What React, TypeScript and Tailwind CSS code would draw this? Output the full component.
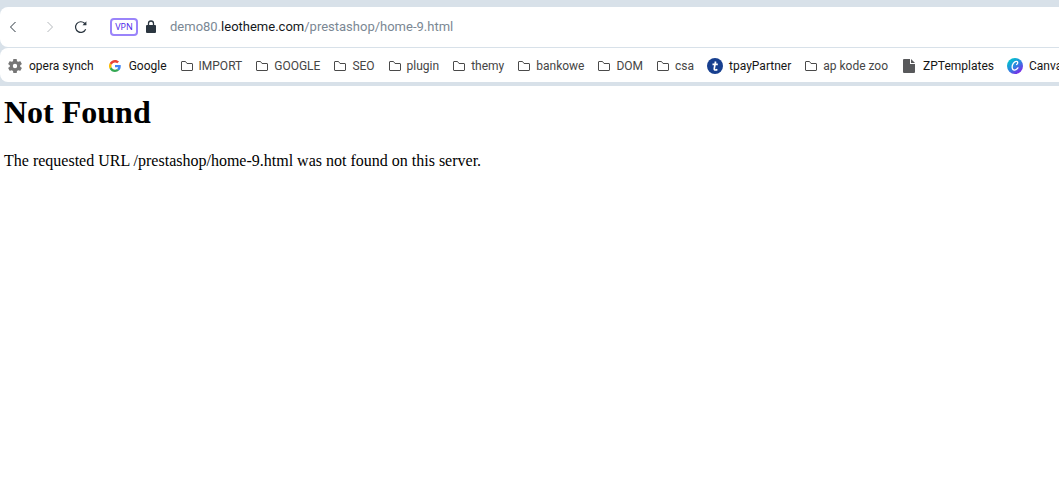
import React from 'react';
import { clsx } from 'clsx';

type IconKind = 'gear' | 'google' | 'folder' | 'tpay' | 'file' | 'canva';

interface Bookmark {
  label: string;
  icon: IconKind;
}

const bookmarks: Bookmark[] = [
  { label: 'opera synch', icon: 'gear' },
  { label: 'Google', icon: 'google' },
  { label: 'IMPORT', icon: 'folder' },
  { label: 'GOOGLE', icon: 'folder' },
  { label: 'SEO', icon: 'folder' },
  { label: 'plugin', icon: 'folder' },
  { label: 'themy', icon: 'folder' },
  { label: 'bankowe', icon: 'folder' },
  { label: 'DOM', icon: 'folder' },
  { label: 'csa', icon: 'folder' },
  { label: 'tpayPartner', icon: 'tpay' },
  { label: 'ap kode zoo', icon: 'folder' },
  { label: 'ZPTemplates', icon: 'file' },
  { label: 'Canva', icon: 'canva' },
];

const BookmarkIcon: React.FC<{ kind: IconKind }> = ({ kind }) => {
  switch (kind) {
    case 'gear':
      return (
        <svg className="h-4 w-4" viewBox="1 1 22 22" fill="#767676">
          <path d="M19.14 12.94c.04-.3.06-.61.06-.94s-.02-.64-.07-.94l2.03-1.58a.49.49 0 0 0 .12-.61l-1.92-3.32a.49.49 0 0 0-.59-.22l-2.39.96a7 7 0 0 0-1.62-.94l-.36-2.54a.48.48 0 0 0-.48-.41h-3.84a.47.47 0 0 0-.47.41l-.36 2.54c-.59.24-1.13.57-1.62.94l-2.39-.96a.48.48 0 0 0-.59.22L2.74 8.87a.47.47 0 0 0 .12.61l2.03 1.58a6 6 0 0 0 0 1.88l-2.03 1.58a.49.49 0 0 0-.12.61l1.92 3.32c.12.22.37.29.59.22l2.39-.96c.5.38 1.03.7 1.62.94l.36 2.54c.05.24.24.41.48.41h3.84c.24 0 .44-.17.47-.41l.36-2.54a7 7 0 0 0 1.62-.94l2.39.96c.22.08.47 0 .59-.22l1.92-3.32a.47.47 0 0 0-.12-.61zM12 15a3 3 0 1 1 0-6 3 3 0 0 1 0 6z" />
        </svg>
      );
    case 'google':
      return (
        <svg className="h-3 w-3" viewBox="0 0 48 48">
          <path fill="#ea4335" d="M24 9.5c3.5 0 6.7 1.2 9.2 3.6l6.9-6.9C35.9 2.4 30.5 0 24 0 14.6 0 6.5 5.4 2.6 13.2l8 6.2C12.4 13.7 17.7 9.5 24 9.5z" />
          <path fill="#4285f4" d="M47 24.5c0-1.6-.2-3.1-.4-4.5H24v9h12.9c-.6 3-2.3 5.5-4.8 7.2l7.7 6C44.4 38 47 31.8 47 24.5z" />
          <path fill="#fbbc05" d="M10.5 28.6a14.5 14.5 0 0 1 0-9.2l-8-6.2a24 24 0 0 0 0 21.6z" />
          <path fill="#34a853" d="M24 48c6.5 0 11.9-2.1 15.9-5.8l-7.7-6c-2.2 1.5-4.9 2.3-8.2 2.3-6.3 0-11.6-4.2-13.5-9.9l-8 6.2C6.5 42.6 14.6 48 24 48z" />
        </svg>
      );
    case 'tpay':
      return (
        <svg className="h-4 w-4" viewBox="0 0 16 16" fill="none">
          <circle cx="8" cy="8" r="8" fill="#173f8f" />
          <path d="M8.6 3.5 7.3 10.3Q7 12.1 8.7 12Q9.5 12 10.3 11.3M5.5 6.3h5.3" stroke="#fff" strokeWidth="1.7" />
        </svg>
      );
    case 'file':
      return (
        <svg className="h-3.5 w-3" viewBox="0 0 12 14" fill="#58595b">
          <path d="M1 0h6v5h5v8a1 1 0 0 1-1 1H1a1 1 0 0 1-1-1V1a1 1 0 0 1 1-1z" />
          <path d="M8 0l4 4H8z" />
        </svg>
      );
    case 'canva':
      return (
        <svg className="h-4 w-4" viewBox="0 0 16 16" fill="none">
          <defs>
            <linearGradient id="canva" x1="2" y1="2" x2="12" y2="15" gradientUnits="userSpaceOnUse">
              <stop stopColor="#00c4cc" />
              <stop offset="0.5" stopColor="#2a86df" />
              <stop offset="1" stopColor="#7d2ae8" />
            </linearGradient>
          </defs>
          <circle cx="8" cy="8" r="8" fill="url(#canva)" />
          <path d="M9.6 6.5c1.2-.5 1.7-2.9.1-3.1C7.4 3 4.8 6.6 5.2 9.7c.4 3.2 3.6 3.2 5.7.2" stroke="#fff" strokeWidth="1.3" strokeLinecap="round" />
        </svg>
      );
    default:
      return (
        <svg className="h-3 w-3" viewBox="0 0 12 12" fill="none" stroke="#4a4a4a">
          <path d="M.5 10V2q0-.5.5-.5h3.5l1.5 2h5q.5 0 .5.5v6q0 .5-.5.5H1q-.5 0-.5-.5z" />
        </svg>
      );
  }
};

const AddressBar: React.FC = () => (
  <div className="flex h-10 items-center rounded-l-lg bg-white pl-2">
    <button type="button" aria-label="Back" className="mr-7 text-[#2b3640]">
      <svg className="h-3 w-2.5" viewBox="0 0 10 12" fill="none" stroke="currentColor">
        <path d="M7.5 1 2.5 6l5 5" />
      </svg>
    </button>
    <button type="button" aria-label="Forward" disabled className="mr-[18px] text-[#b5b9bd]">
      <svg className="h-3 w-2.5" viewBox="0 0 10 12" fill="none" stroke="currentColor">
        <path d="m1.500 1 5 5-5 5" />
      </svg>
    </button>
    <button type="button" aria-label="Reload" className="mr-[22px] text-[#2b3640]">
      <svg className="h-3.5 w-3.5" viewBox="0 0 14 14" fill="none" stroke="currentColor" strokeWidth="1.2">
        <path d="M11.7 9.2A5.3 5.3 0 1 1 10.5 3.2L12 4.7" />
        <path d="M12.4 1.3v3.9H8.500z" fill="currentColor" stroke="none" />
      </svg>
    </button>
    <button
      type="button"
      className="mr-2 flex h-[18px] w-7 items-center justify-center rounded border-2 border-[#9a84fa] font-['Open_Sans',sans-serif] text-[9px] font-medium text-[#4a25e8]"
    >
      VPN
    </button>
    <svg className="mr-3.5 h-3.5 w-2.5 shrink-0" viewBox="0 0 10 14" fill="none">
      <path d="M2.5 6V3.500a2.500 2.500 0 0 1 5 0V6" stroke="#2b3640" strokeWidth="1.3" />
      <rect y="5" width="10" height="8" rx="1" fill="#2b3640" />
    </svg>
    <p className="text-[13px] whitespace-nowrap text-[#7b8894]">
      demo80.<span className="text-[#15191d]">leotheme.com</span>/prestashop/home-9.html
    </p>
  </div>
);

const BookmarksBar: React.FC = () => (
  <nav className="flex h-[34px] items-center gap-[13px] overflow-hidden rounded-l-lg bg-white pt-0.5 pl-[7px]">
    {bookmarks.map(({ label, icon }) => (
      <a
        key={label}
        href="#"
        className={clsx(
          'flex shrink-0 items-center gap-1.5 text-[12px] whitespace-nowrap',
          icon === 'folder' ? 'pl-px text-[#454545]' : 'text-[#161616]'
        )}
      >
        <span className={clsx('flex justify-center', icon === 'folder' ? 'w-3' : 'w-4')}>
          <BookmarkIcon kind={icon} />
        </span>
        {label}
      </a>
    ))}
  </nav>
);

const App: React.FC = () => {
  return (
    <div className="min-h-screen bg-white">
      <header className="flex flex-col gap-px bg-[#d8e1e9] pt-[7px] pb-1 font-['Roboto',sans-serif]">
        <AddressBar />
        <BookmarksBar />
      </header>
      <main className="px-1 pt-2 font-['Liberation_Serif',serif] text-black">
        <h1 className="text-[32px] leading-9 font-bold">Not Found</h1>
        <p className="mt-[21px] text-[16px] leading-5">
          The requested URL /prestashop/home-9.html was not found on this server.
        </p>
      </main>
    </div>
  );
};

export default App;
